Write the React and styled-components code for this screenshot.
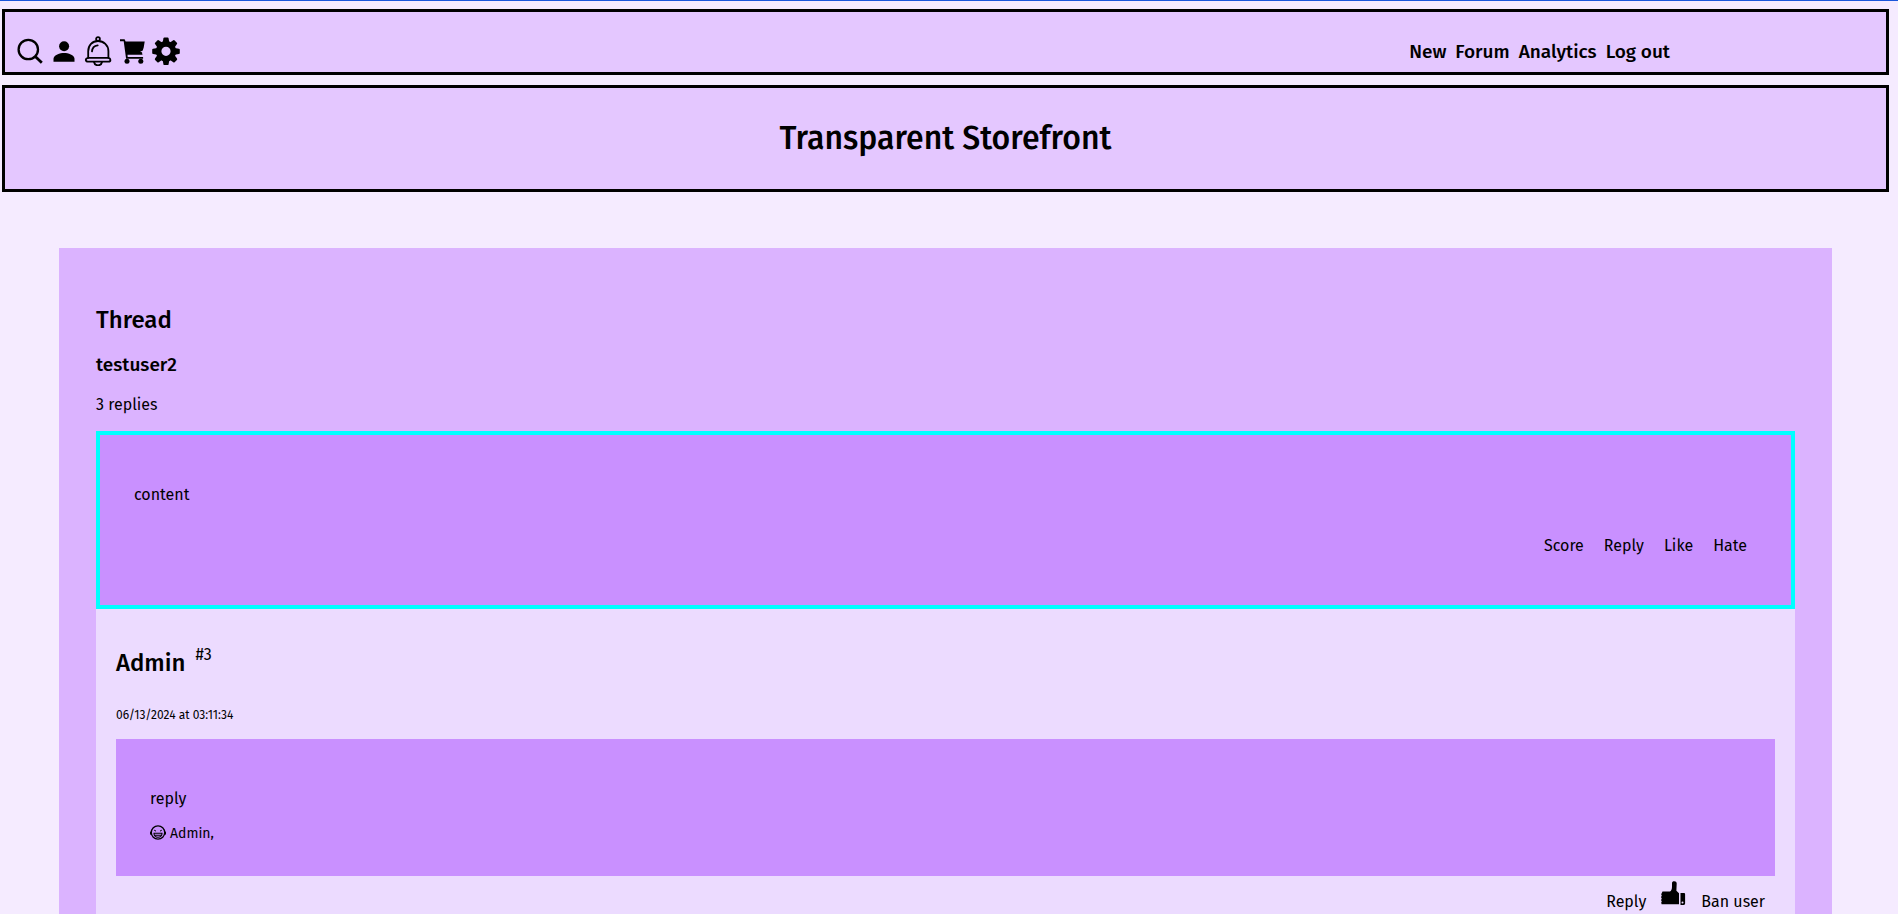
import React from "react";
import styled, { createGlobalStyle } from "styled-components";

const GlobalStyle = createGlobalStyle`
  *, *::before, *::after { box-sizing: border-box; }
  body {
    margin: 0;
    background: #f5ebff;
    color: #000;
    font: 400 16px/20px "Fira Sans", "Noto Sans", sans-serif;
  }
  h1, h2, h3, p { margin: 0; font-weight: 500; }
`;

const Page = styled.div`
  display: flex;
  flex-direction: column;
  min-height: 100vh;
  padding: 8px 9px 0 2px;
  border-top: 1px solid #1a56db;
`;

const NavBar = styled.nav`
  display: flex;
  align-items: flex-end;
  justify-content: space-between;
  padding: 24px 216px 6px 10px;
  border: 3px solid #000;
  background: #e4c7ff;
`;

const IconGroup = styled.div`
  display: flex;
  gap: 4px;
`;

const IconButton = styled.button`
  display: block;
  padding: 0;
  border: 0;
  background: none;
  color: inherit;
  cursor: pointer;
  svg { display: block; }
`;

const NavLinks = styled.div`
  display: flex;
  gap: 9px;
`;

const NavLink = styled.a`
  color: inherit;
  font-size: 19px;
  line-height: 28px;
  font-weight: 500;
  text-decoration: none;
`;

const Banner = styled.header`
  display: flex;
  justify-content: center;
  margin-top: 10px;
  padding: 31px 20px 32px;
  border: 3px solid #000;
  background: #e4c7ff;
`;

const SiteTitle = styled.h1`
  font-size: 32px;
  line-height: 38px;
`;

const Main = styled.main`
  display: flex;
  flex-direction: column;
  flex: 1;
  margin: 56px 57px 0;
  padding: 58px 37px 0;
  background: #dbb3ff;
`;

const Heading = styled.h2`
  font-size: 24px;
  line-height: 29px;
`;

const Author = styled.h3`
  margin-top: 19px;
  font-size: 19px;
  line-height: 22px;
`;

const ReplyCount = styled.p`
  margin: 19px 0 16px;
  font-weight: inherit;
`;

const Post = styled.article`
  padding: 34px;
  background: #c990ff;
  border: ${(p) => (p.$highlighted ? "4px solid #00ffff" : "0")};
`;

const PostText = styled.p`
  margin: 16px 0;
  font-weight: inherit;
`;

const Actions = styled.div`
  display: flex;
  justify-content: flex-end;
  padding: 15px 0;
`;

const ActionLink = styled.a`
  padding: 0 10px;
  color: inherit;
  text-decoration: none;
`;

const Reply = styled.section`
  flex: 1;
  padding: 40px 20px 0;
  background: #ecdbff;
`;

const ReplyHeader = styled.div`
  display: flex;
  align-items: flex-start;
  gap: 10px;
`;

const ReplyNumber = styled.span`
  margin-top: -4px;
`;

const Timestamp = styled.p`
  margin: 30px 0 16px;
  font-size: 12px;
  line-height: 15px;
  font-weight: inherit;
`;

const Reactions = styled.p`
  display: flex;
  gap: 4px;
  font-size: 14px;
  line-height: 17px;
  font-weight: inherit;
`;

const ReplyActions = styled.div`
  display: flex;
  align-items: flex-end;
  justify-content: flex-end;
  padding-top: 5px;
`;

const LikeButton = styled(IconButton)`
  padding: 0 5px 6px;
`;

const SearchIcon = () => (
  <svg width="30" height="30" viewBox="0 0 30 30" fill="none" stroke="currentColor" aria-hidden="true">
    <circle cx="13.3" cy="13.5" r="9.7" strokeWidth="2.3" />
    <path d="M20.3 20.5l6.5 6.2" strokeWidth="2.8" />
  </svg>
);

const UserIcon = () => (
  <svg width="30" height="30" viewBox="0 0 30 30" fill="currentColor" aria-hidden="true">
    <circle cx="15.1" cy="10.3" r="5" />
    <path d="M4.500 25.700v-2.900c0-3.800 6.700-5.800 10.600-5.800s10.400 2 10.400 5.800v2.900z" />
  </svg>
);

const BellIcon = () => (
  <svg width="30" height="30" viewBox="0 0 30 30" fill="none" stroke="currentColor" strokeWidth="1.8" strokeLinecap="round" aria-hidden="true">
    <circle cx="15" cy="3" r="1.9" />
    <path d="M5.200 21.800v-6.600C5.200 9.300 9.300 5 15 5s10.400 4.300 10.400 10.200v6.600" />
    <path d="M5.200 21.800h20.200c2.700.6 2.700 3.900 0 3.900H5.200c-3.200 0-3.200-3.300 0-3.900z" />
    <path d="M11 26c.4 2.200 2 3.300 4 3.300s3.600-1.100 4-3.300" />
    <path d="M9 15.400c.2-3.200 2.200-5.700 5.700-6.100" />
  </svg>
);

const CartIcon = () => (
  <svg width="30" height="30" viewBox="0 0 30 30" fill="currentColor" aria-hidden="true">
    <path d="M3 3.300h4.600l1 2.200h19.100l-1 6-1.700 5.300.5 1.900H10.500l.2 2.200h15.400v1.900H9.100L6.700 5.300H3z" />
    <circle cx="10" cy="25.2" r="2.5" />
    <circle cx="23.8" cy="25.2" r="2.5" />
    <path d="M27.300 14l-4.200 1.800 2.600.8z" fill="#e4c7ff" />
  </svg>
);

const GearIcon = () => (
  <svg width="30" height="30" viewBox="0 0 30 30" aria-hidden="true">
    <g transform="translate(15 15.3)">
      <circle r="7.4" fill="none" stroke="currentColor" strokeWidth="5.6" />
      {[0, 45, 90, 135, 180, 225, 270, 315].map((angle) => (
        <path
          key={angle}
          transform={`rotate(${angle})`}
          d="M-3.400-8.600l.8-4.300q.2-.9 1-.9h3.200q.8 0 1 .9l.8 4.300z"
          fill="currentColor"
        />
      ))}
    </g>
  </svg>
);

const ThumbIcon = () => (
  <svg width="25" height="25" viewBox="0 0 25 25" fill="currentColor" aria-hidden="true">
    <path d="M1.500 10.500H9c1.500-.9 2-2.500 2-5V2.300C11 .8 11.900.3 13.300.3s2.400.8 2.400 2.300l-.3 7.200 2.600 2.400v11H.6l-.4-1.700.6-1-.8-1.600.8-1.200L0 16l.8-1.300-.6-1.500z" />
    <path fillRule="evenodd" d="M19.500 11.900h3.300c.8 0 1.300.5 1.300 1.400v9c0 1-.5 1.600-1.500 1.600h-3.100zM21.500 20.500a1 1 0 100 2 1 1 0 000-2z" />
  </svg>
);

const LaughIcon = () => (
  <svg width="16" height="16" viewBox="0 0 16 16" fill="none" stroke="currentColor" role="img" aria-label="Laughing">
    <circle cx="8" cy="7.5" r="6.7" strokeWidth="1.300" />
    <path d="M4 8.200h8c0 2.600-1.600 4.100-4 4.100S4 10.800 4 8.200zM4.500 10.200h7" strokeWidth="1.100" />
    <path d="M1.200 6.800C0 7.800 0 9.200 1.600 9.200M14.800 6.800c1.200 1 1.200 2.400-.4 2.400" strokeWidth="1.300" />
    <path d="M4.200 5.200l1.800.9M11.800 5.200l-1.800.9" strokeWidth="1" />
  </svg>
);

const TOOLS = [
  ["Search", SearchIcon],
  ["Profile", UserIcon],
  ["Notifications", BellIcon],
  ["Cart", CartIcon],
  ["Settings", GearIcon],
];
const LINKS = ["New", "Forum", "Analytics", "Log out"];
const POST_ACTIONS = ["Score", "Reply", "Like", "Hate"];

export default function App() {
  return (
    <>
      <GlobalStyle />
      <Page>
        <NavBar>
          <IconGroup>
            {TOOLS.map(([label, Icon]) => (
              <IconButton key={label} type="button" aria-label={label}>
                <Icon />
              </IconButton>
            ))}
          </IconGroup>
          <NavLinks>
            {LINKS.map((label) => (
              <NavLink key={label} href="#">{label}</NavLink>
            ))}
          </NavLinks>
        </NavBar>
        <Banner>
          <SiteTitle>Transparent Storefront</SiteTitle>
        </Banner>
        <Main>
          <Heading>Thread</Heading>
          <Author>testuser2</Author>
          <ReplyCount>3 replies</ReplyCount>
          <Post $highlighted>
            <PostText>content</PostText>
            <Actions>
              {POST_ACTIONS.map((label) => (
                <ActionLink key={label} href="#">{label}</ActionLink>
              ))}
            </Actions>
          </Post>
          <Reply>
            <ReplyHeader>
              <Heading>Admin</Heading>
              <ReplyNumber>#3</ReplyNumber>
            </ReplyHeader>
            <Timestamp>06/13/2024 at 03:11:34</Timestamp>
            <Post>
              <PostText>reply</PostText>
              <Reactions>
                <LaughIcon />
                <span>Admin,</span>
              </Reactions>
            </Post>
            <ReplyActions>
              <ActionLink href="#">Reply</ActionLink>
              <LikeButton type="button" aria-label="Like">
                <ThumbIcon />
              </LikeButton>
              <ActionLink href="#">Ban user</ActionLink>
            </ReplyActions>
          </Reply>
        </Main>
      </Page>
    </>
  );
}
